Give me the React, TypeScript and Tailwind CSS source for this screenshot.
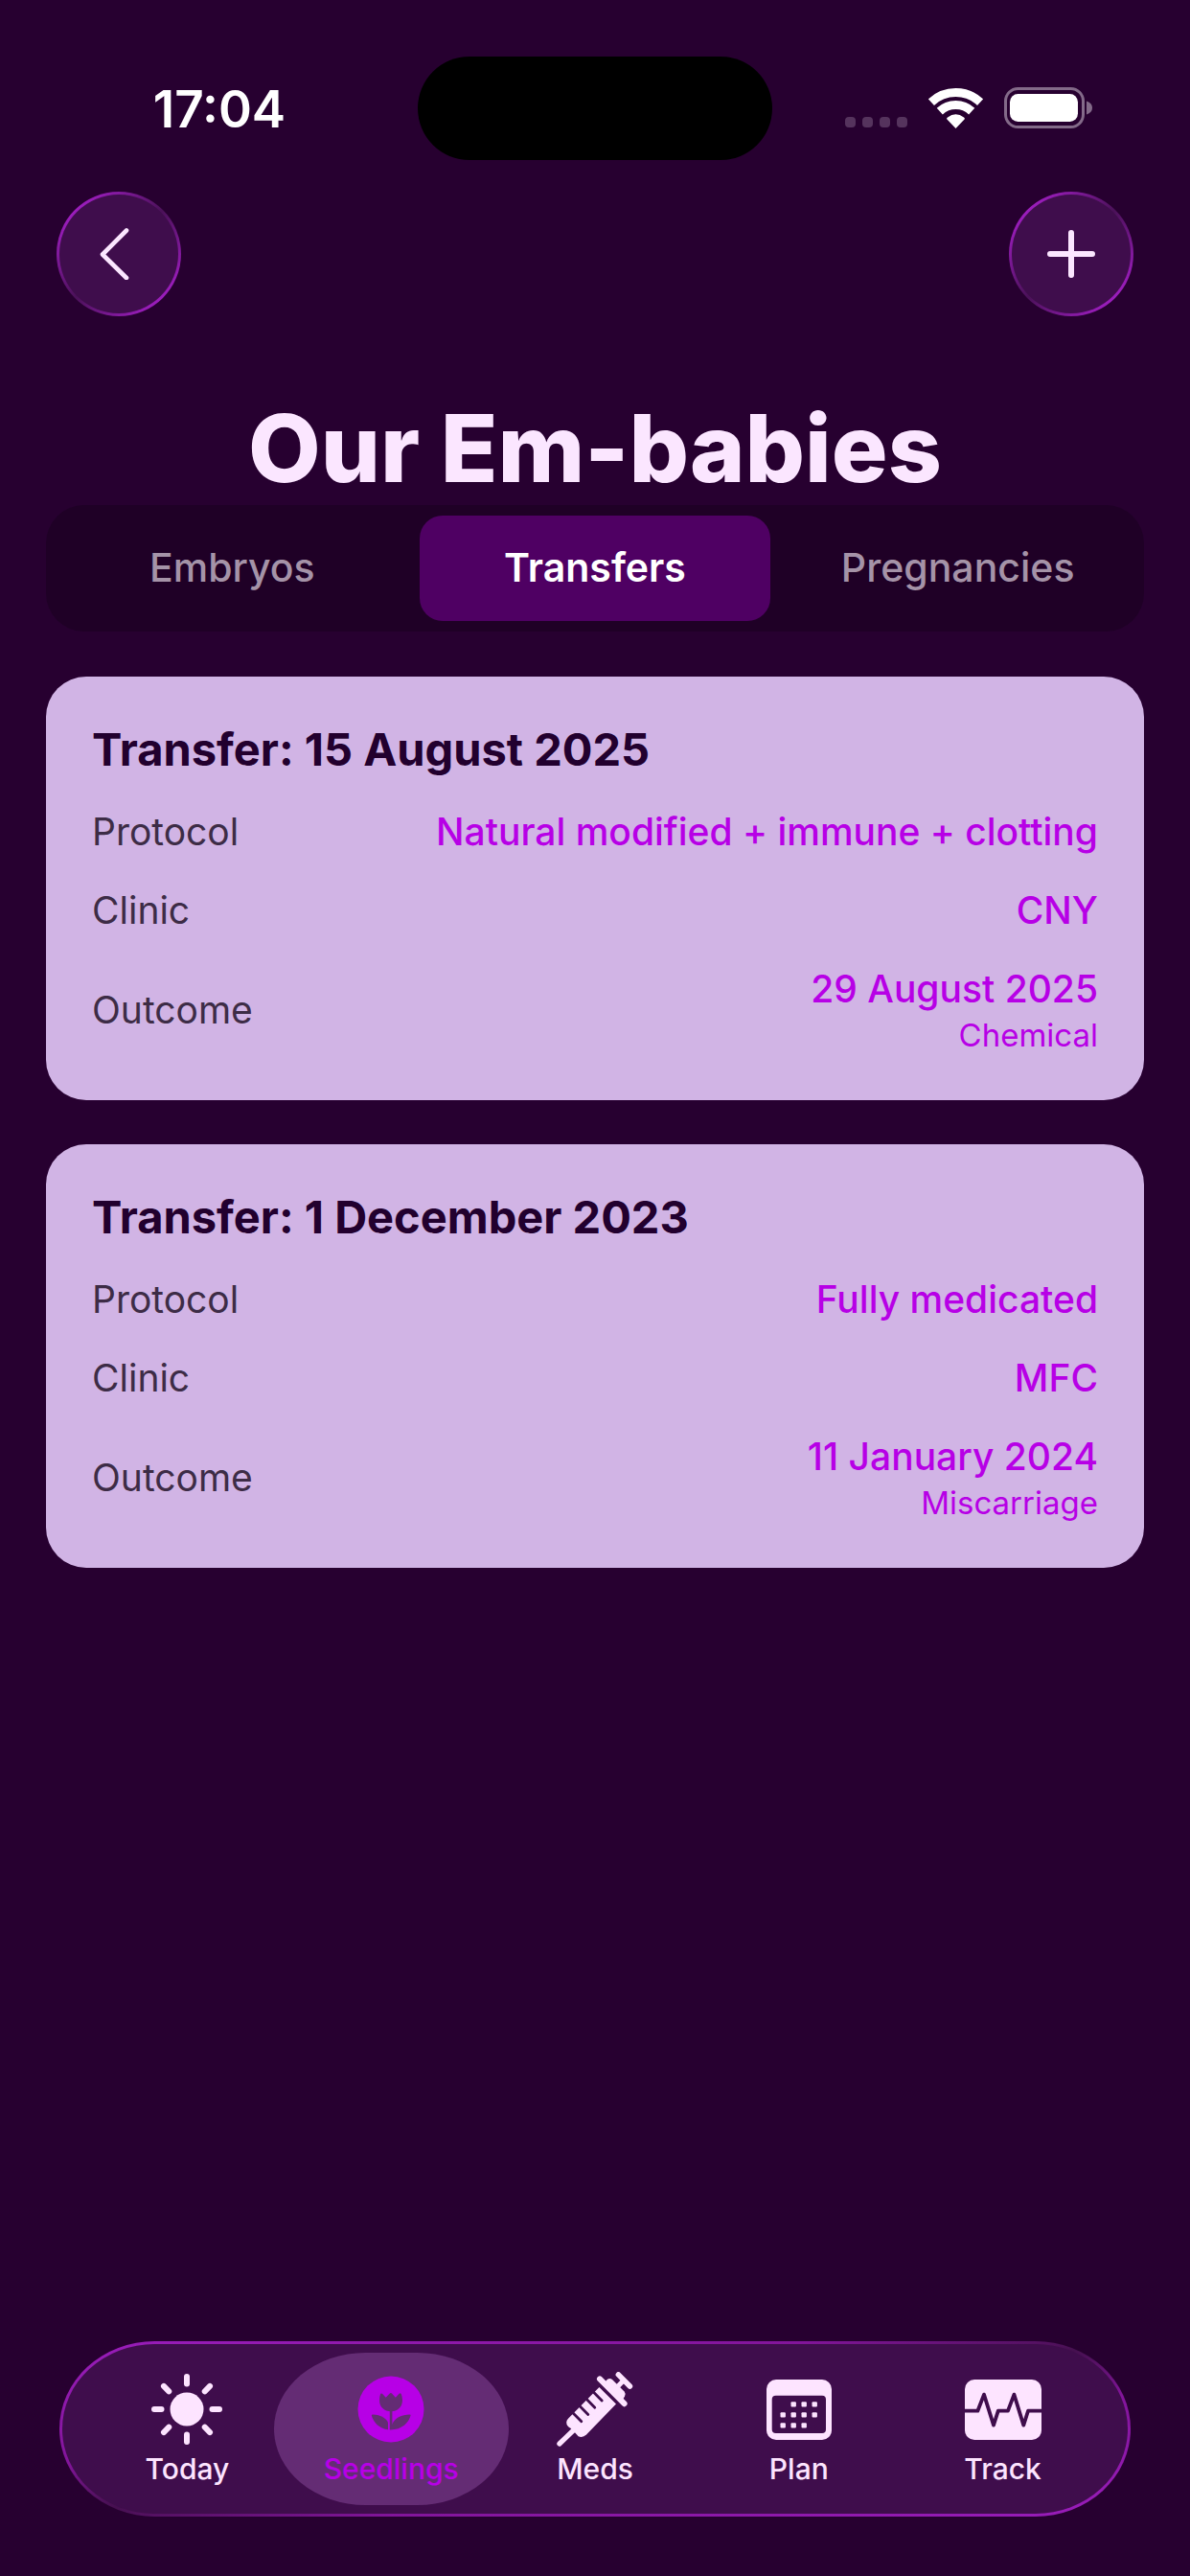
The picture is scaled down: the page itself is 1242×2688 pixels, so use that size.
import { useState } from "react";
import type { ReactNode } from "react";

const tabs = ["Embryos", "Transfers", "Pregnancies"];

const transfers = [
  {
    date: "15 August 2025",
    protocol: "Natural modified + immune + clotting",
    clinic: "CNY",
    outcomeDate: "29 August 2025",
    outcome: "Chemical",
  },
  {
    date: "1 December 2023",
    protocol: "Fully medicated",
    clinic: "MFC",
    outcomeDate: "11 January 2024",
    outcome: "Miscarriage",
  },
];

function SunIcon() {
  return (
    <svg width="76" height="76" viewBox="0 0 76 76" aria-hidden="true">
      <circle cx="38" cy="38" r="17.5" fill="currentColor" />
      {[0, 45, 90, 135, 180, 225, 270, 315].map((a) => (
        <path key={a} d="M38 11.5V4" stroke="currentColor" strokeWidth="6" strokeLinecap="round" transform={`rotate(${a} 38 38)`} />
      ))}
    </svg>
  );
}

function TulipIcon() {
  return (
    <svg width="70" height="70" viewBox="0 0 70 70" aria-hidden="true">
      <circle cx="35" cy="35" r="34.5" fill="currentColor" />
      <g fill="#642c74">
        <path d="M24.2 18.8Q25.2 18 26.2 19L29.7 22.7L33.6 18.7Q34.9 17.4 36.2 18.7L39.8 22.7L43.6 18.8Q44.9 17.7 45.7 18.9Q47 21.8 47 25.7C47 32.5 41.8 37.2 35 37.2C28.2 37.2 23 32.5 23 25.7Q23 21.8 24.2 18.8Z" />
        <path d="M33.8 36h2.6v20h-2.6z" />
        <path d="M14.8 41.2Q14.8 40.4 16 40.4C24 40.4 32 45.4 32 49.6V56.2C23 55.4 16.5 48.6 14.8 41.2Z" />
        <path d="M55.6 41.2Q55.8 40.4 54.4 40.4C46.5 40.4 39 44 36.4 50.4L33.8 56.4C46 56.8 54 48.8 55.6 41.2Z" />
      </g>
    </svg>
  );
}

function SyringeIcon() {
  return (
    <svg width="80" height="78" viewBox="0 0 80 78" fill="none" stroke="currentColor" strokeLinecap="round" aria-hidden="true">
      <path d="M2.9 75L18 60.5" strokeWidth="5.2" />
      <path d="M44.4 16L62 33.6L31 65.4Q27 69.2 22.6 67.2L19.2 63.6L14.8 59Q10.2 57 10.2 52.6Q10.4 50.4 12 48.8Z" fill="currentColor" stroke="none" />
      <path d="M36.6 19.3L47.2 30M29.6 26.8L39.8 37.3M22.4 33.9L32.8 44.4M15.4 41.2L25.8 51.8" stroke="#3f0d4c" strokeWidth="2.8" />
      <path d="M45 7.4L70.6 33.2" strokeWidth="6" />
      <path d="M50 11L53 7.8Q55.4 6 58 8L70.6 20.6Q72.4 22.8 71 25.6L68.4 30Z" fill="currentColor" stroke="none" />
      <path d="M62 17L70 8.8" strokeWidth="5" />
      <path d="M64.4 2.9L76.4 15" strokeWidth="5.6" />
    </svg>
  );
}

function CalendarIcon() {
  const dots = [
    [28, 26], [39, 26], [50, 26],
    [17, 37], [28, 37], [39, 37], [50, 37],
    [17, 48], [28, 48], [39, 48],
  ];
  return (
    <svg width="68" height="63" viewBox="0 0 68 63" aria-hidden="true">
      <rect width="68" height="63" rx="10" fill="currentColor" />
      <rect x="5.7" y="16.7" width="56.3" height="39.3" rx="4" fill="#3f0d4c" />
      {dots.map(([x, y]) => (
        <rect key={`${x}-${y}`} x={x - 2.5} y={y - 2.8} width="5.4" height="5.4" rx="1" fill="currentColor" />
      ))}
    </svg>
  );
}

function PulseIcon() {
  return (
    <svg width="80" height="63" viewBox="0 0 80 63" aria-hidden="true">
      <rect width="80" height="63" rx="10" fill="currentColor" />
      <path
        d="M0 32.7H13.4L20 15.6L30 47.6L34.8 32.7H45L51.4 15.6L61.3 47.6L66 32.7H80"
        fill="none"
        stroke="#3f0d4c"
        strokeWidth="3.8"
        strokeLinejoin="round"
      />
    </svg>
  );
}

function StatusBar() {
  return (
    <div className="grid h-[200px] grid-cols-[1fr_auto_1fr] items-start pt-[59px]">
      <div className="flex h-[112px] items-center justify-center pl-[22px] text-[53px] font-semibold text-white">17:04</div>
      <div className="h-[108px] w-[370px] rounded-full bg-black" />
      <div className="flex h-[107px] items-center justify-end gap-[22px] pr-[102px]">
        <div className="flex gap-[7px] pt-[30px]">
          {[0, 1, 2, 3].map((i) => (
            <span key={i} className="size-[11px] rounded-[4px] bg-[#55335d]" />
          ))}
        </div>
        <svg width="57" height="43" viewBox="0 0 57 43" fill="none" stroke="#fff" strokeWidth="9" aria-label="Wi-Fi">
          <path d="M2.9 15.6A37.5 37.5 0 0 1 54.1 15.6" />
          <path d="M11.8 25.1A24.5 24.5 0 0 1 45.2 25.1" />
          <path d="M28.5 43L19.2 33.2Q18.8 32 20 31.4Q28.5 25 37 31.4Q38.2 32 37.8 33.2Z" fill="#fff" stroke="none" />
        </svg>
        <svg width="92" height="43" viewBox="0 0 92 43" aria-label="Battery">
          <rect x="1.5" y="1.5" width="81" height="40" rx="13" fill="none" stroke="#836a89" strokeWidth="3" />
          <rect x="6" y="7" width="71" height="29" rx="8.5" fill="#fff" />
          <path d="M86 14.5Q92 16.5 92 21.5T86 28.5Z" fill="#836a89" />
        </svg>
      </div>
    </div>
  );
}

function RoundButton({ label, children }: { label: string; children: ReactNode }) {
  return (
    <button
      type="button"
      aria-label={label}
      className="size-[130px] rounded-full bg-[linear-gradient(135deg,#9a1dbb_15%,#4a1158_50%,#9a1dbb_85%)] p-[3px]"
    >
      <span className="flex size-full items-center justify-center rounded-full bg-[#3f0d4c] text-[#fbe6ff]">{children}</span>
    </button>
  );
}

function Row({ label, children }: { label: string; children: ReactNode }) {
  return (
    <div className="flex items-center justify-between gap-8">
      <dt className="text-[#3d2c46]">{label}</dt>
      <dd className="text-right font-medium text-[#b700e6]">{children}</dd>
    </div>
  );
}

const navItems = [
  { label: "Today", icon: SunIcon },
  { label: "Seedlings", icon: TulipIcon },
  { label: "Meds", icon: SyringeIcon },
  { label: "Plan", icon: CalendarIcon },
  { label: "Track", icon: PulseIcon },
];

export default function App() {
  const [tab, setTab] = useState("Transfers");

  return (
    <div className="flex min-h-screen flex-col bg-[#270030] font-['Inter','Liberation_Sans',sans-serif]">
      <StatusBar />

      {/* Header */}
      <header>
        <div className="flex justify-between px-[59px]">
          <RoundButton label="Back">
            <svg width="40" height="54" viewBox="0 0 40 54" fill="none" stroke="currentColor" strokeWidth="4.6" strokeLinecap="round" strokeLinejoin="round">
              <path d="M28 2.5L3 27.5L28 52" />
            </svg>
          </RoundButton>
          <RoundButton label="Add transfer">
            <svg width="50" height="50" viewBox="0 0 50 50" stroke="currentColor" strokeWidth="6" strokeLinecap="round">
              <path d="M25 3V47M3 25H47" />
            </svg>
          </RoundButton>
        </div>
        <h1 className="mt-[78px] text-center text-[98px] leading-[119px] font-extrabold text-[#fbe6ff]">Our Em-babies</h1>
      </header>

      <main className="px-12">
        {/* Segmented control */}
        <div role="tablist" className="grid grid-cols-3 gap-3 rounded-[40px] bg-[#1f0026] p-[11px]">
          {tabs.map((t) => (
            <button
              key={t}
              type="button"
              role="tab"
              aria-selected={tab === t}
              onClick={() => setTab(t)}
              className={`h-[110px] rounded-3xl text-[41px] ${
                tab === t ? "bg-[#4f0063] font-semibold text-white" : "font-medium text-[#a593a8]"
              }`}
            >
              {t}
            </button>
          ))}
        </div>

        {/* Transfers */}
        {tab === "Transfers" && (
          <div className="mt-[47px] flex flex-col gap-[46px]">
            {transfers.map((t) => (
              <article key={t.date} className="rounded-[42px] bg-[#d1b4e5] p-12">
                <h2 className="text-[47px] leading-[56px] font-bold text-[#22002e]">Transfer: {t.date}</h2>
                <dl className="mt-[34px] flex flex-col gap-[34px] text-[39px] leading-[48px]">
                  <Row label="Protocol">{t.protocol}</Row>
                  <Row label="Clinic">{t.clinic}</Row>
                  <Row label="Outcome">
                    {t.outcomeDate}
                    <span className="block pt-1 text-[33px] leading-10 font-normal">{t.outcome}</span>
                  </Row>
                </dl>
              </article>
            ))}
          </div>
        )}
      </main>

      {/* Tab bar */}
      <nav className="mx-[62px] mt-auto mb-[62px] rounded-[100px/92px] bg-[linear-gradient(to_bottom_right,#9a1dbb,#82159a_35%,#45104f_50%,#82159a_65%,#9a1dbb)] p-[3px]">
        <div className="grid grid-cols-5 rounded-[97px/89px] bg-[#3f0d4c] px-6 py-[9px]">
          {navItems.map(({ label, icon: Icon }) => (
            <a
              key={label}
              href={`#${label.toLowerCase()}`}
              className={`-mx-4 flex h-[159px] flex-col items-center rounded-[96px/80px] pt-[20px] text-[30px] leading-9 font-medium ${
                label === "Seedlings" ? "bg-[#642c74] text-[#b700e6]" : "text-[#fde4ff]"
              }`}
            >
              <span className="flex h-[78px] items-center">
                <Icon />
              </span>
              <span className="mt-[5px]">{label}</span>
            </a>
          ))}
        </div>
      </nav>
    </div>
  );
}
